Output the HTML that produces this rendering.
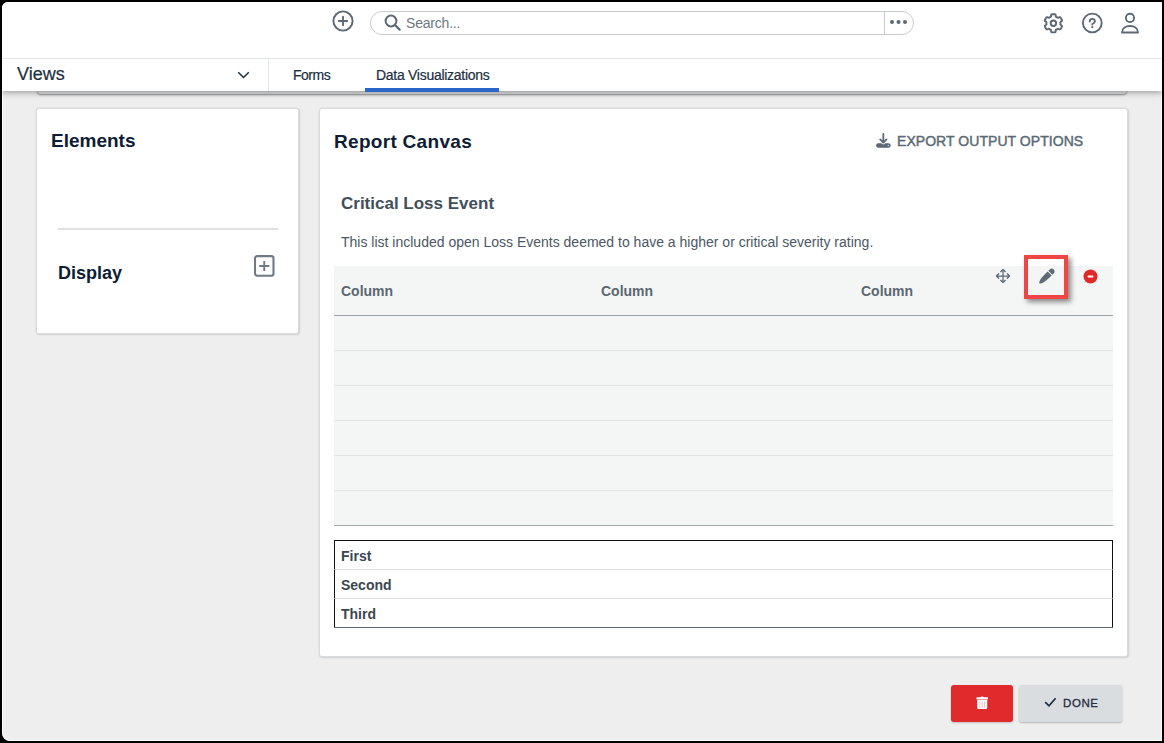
<!DOCTYPE html>
<html><head><meta charset="utf-8">
<style>
*{box-sizing:border-box;margin:0;padding:0}
html,body{width:1164px;height:743px;overflow:hidden;background:#000;font-family:"Liberation Sans",sans-serif}
#win{position:absolute;left:2px;top:2px;width:1160px;height:739px;background:#eeeeee;overflow:hidden;border-radius:6px 0 0 8px}
#win::after{content:"";position:absolute;left:0;top:0;right:0;bottom:0;border-left:1px solid #fff;border-bottom:1px solid #fff;border-right:1px solid #fff;border-radius:6px 0 0 8px;pointer-events:none}
.abs{position:absolute}
/* header */
#hdr{position:absolute;left:0;top:0;width:1160px;height:89px;background:#fff;box-shadow:0 2px 6px rgba(0,0,0,.32);z-index:5}
#hline{position:absolute;left:0;top:56px;width:1160px;height:1px;background:#e3e6e8}
#behind{position:absolute;left:35px;top:60px;width:1090px;height:32px;background:#dfe1e3;border-radius:4px;box-shadow:0 1px 2px rgba(0,0,0,.4);z-index:4}
.navt{position:absolute;font-size:14px;color:#1b2e40;-webkit-text-stroke:.2px #1b2e40}
.card{position:absolute;background:#fff;border:1px solid #d9dcde;border-radius:3px;box-shadow:0 0 2px rgba(0,0,0,.12),1px 1px 2px rgba(0,0,0,.1)}
.ttl{position:absolute;font-weight:bold;color:#0e1d33}
.colh{position:absolute;font-size:14px;font-weight:bold;color:#5b6770}
.rowl{position:absolute;left:0;width:779px;height:1px;background:#e2e5e6}
.lrow{position:absolute;left:0;width:779px;height:29px;border-left:1px solid #111;border-right:1px solid #111}
.lrow span{position:absolute;left:6px;top:8px;font-size:14px;font-weight:bold;color:#3b4650}
</style></head><body>
<div id="win">
  <div id="hdr">
    <!-- plus circle -->
    <svg class="abs" style="left:330px;top:8px" width="22" height="22" viewBox="0 0 22 22"><circle cx="11" cy="11" r="9.6" fill="none" stroke="#5c6873" stroke-width="1.9"/><path d="M11 6.8v8.4M6.8 11h8.4" stroke="#5c6873" stroke-width="1.9" stroke-linecap="round"/></svg>
    <!-- search -->
    <div class="abs" style="left:368px;top:9px;width:544px;height:24px;border:1px solid #c8cbcd;border-radius:12px"></div>
    <div class="abs" style="left:882px;top:10px;width:1px;height:22px;background:#c8cbcd"></div>
    <svg class="abs" style="left:382px;top:12px" width="17" height="17" viewBox="0 0 17 17"><circle cx="7" cy="7" r="5.4" fill="none" stroke="#5c6873" stroke-width="2"/><path d="M11 11l4.6 4.6" stroke="#5c6873" stroke-width="2.2" stroke-linecap="round"/></svg>
    <div class="abs" style="left:404px;top:13px;font-size:14px;letter-spacing:-.2px;color:#6b7780">Search...</div>
    <svg class="abs" style="left:887px;top:16px" width="18" height="8" viewBox="0 0 18 8"><circle cx="3" cy="4" r="2" fill="#5c6873"/><circle cx="9.5" cy="4" r="2" fill="#5c6873"/><circle cx="16" cy="4" r="2" fill="#5c6873"/></svg>
    <!-- gear -->
    <svg class="abs" style="left:1039px;top:9px" width="24" height="24" viewBox="0 0 24 24"><g transform="translate(.4 .3)"><path fill="none" stroke="#5c6873" stroke-width="1.9" stroke-linejoin="round" d="M12.0 2.9L12.4 2.9L12.8 2.9L13.2 3.0L13.6 3.0L14.0 3.1L14.2 3.7L14.3 4.7L14.4 5.4L14.7 5.5L15.0 5.7L15.2 5.8L15.5 5.9L15.8 6.1L16.0 6.3L16.3 6.4L16.5 6.6L17.2 6.3L18.1 5.9L18.7 5.9L19.0 6.2L19.2 6.5L19.5 6.8L19.7 7.1L19.9 7.5L20.1 7.8L20.2 8.2L20.4 8.5L20.6 8.9L20.7 9.3L20.3 9.8L19.5 10.3L19.0 10.8L18.9 11.1L19.0 11.4L19.0 11.7L19.0 12.0L19.0 12.3L19.0 12.6L18.9 12.9L19.0 13.2L19.5 13.7L20.3 14.2L20.7 14.7L20.6 15.1L20.4 15.5L20.2 15.8L20.1 16.2L19.9 16.5L19.7 16.9L19.5 17.2L19.2 17.5L19.0 17.8L18.7 18.1L18.1 18.1L17.2 17.7L16.5 17.4L16.3 17.6L16.0 17.7L15.8 17.9L15.5 18.1L15.2 18.2L15.0 18.3L14.7 18.5L14.4 18.6L14.3 19.3L14.2 20.3L14.0 20.9L13.6 21.0L13.2 21.0L12.8 21.1L12.4 21.1L12.0 21.1L11.6 21.1L11.2 21.1L10.8 21.0L10.4 21.0L10.0 20.9L9.8 20.3L9.7 19.3L9.6 18.6L9.3 18.5L9.0 18.3L8.8 18.2L8.5 18.1L8.2 17.9L8.0 17.7L7.7 17.6L7.5 17.4L6.8 17.7L5.9 18.1L5.3 18.1L5.0 17.8L4.8 17.5L4.5 17.2L4.3 16.9L4.1 16.6L3.9 16.2L3.8 15.8L3.6 15.5L3.4 15.1L3.3 14.7L3.7 14.2L4.5 13.7L5.0 13.2L5.1 12.9L5.0 12.6L5.0 12.3L5.0 12.0L5.0 11.7L5.0 11.4L5.1 11.1L5.0 10.8L4.5 10.3L3.7 9.8L3.3 9.3L3.4 8.9L3.6 8.5L3.8 8.2L3.9 7.8L4.1 7.5L4.3 7.1L4.5 6.8L4.8 6.5L5.0 6.2L5.3 5.9L5.9 5.9L6.8 6.3L7.5 6.6L7.7 6.4L8.0 6.3L8.2 6.1L8.5 5.9L8.8 5.8L9.0 5.7L9.3 5.5L9.6 5.4L9.7 4.7L9.8 3.7L10.0 3.1L10.4 3.0L10.8 3.0L11.2 2.9L11.6 2.9Z"/><circle cx="12" cy="12" r="2.75" fill="none" stroke="#5c6873" stroke-width="1.9"/></g></svg>
    <!-- help -->
    <svg class="abs" style="left:1079px;top:10px" width="23" height="23" viewBox="0 0 23 23"><circle cx="11.3" cy="11" r="9.4" fill="none" stroke="#5c6873" stroke-width="1.9"/><path d="M8.7 9.5A2.6 2.6 0 0 1 13.9 9.5Q13.9 10.9 11.3 12V12.5" fill="none" stroke="#5c6873" stroke-width="1.9" stroke-linecap="round" stroke-linejoin="round"/><circle cx="11.3" cy="15.1" r="1.15" fill="#5c6873"/></svg>
    <!-- user -->
    <svg class="abs" style="left:1118px;top:10px" width="21" height="23" viewBox="0 0 21 23"><circle cx="10" cy="5.9" r="4.1" fill="none" stroke="#5c6873" stroke-width="1.9"/><path d="M2 20.5C2 16.5 5.5 14 10 14S18 16.5 18 20.5Z" fill="none" stroke="#5c6873" stroke-width="1.9" stroke-linejoin="round"/></svg>

    <div id="hline"></div>
    <div class="navt" style="left:15px;top:62px;font-size:18px">Views</div>
    <svg class="abs" style="left:235px;top:69px" width="13" height="8" viewBox="0 0 13 8"><path d="M1.2 1.2l5.3 5.3L11.8 1.2" fill="none" stroke="#1f3344" stroke-width="1.55"/></svg>
    <div class="abs" style="left:266px;top:57px;width:1px;height:32px;background:#e3e6e8"></div>
    <div class="navt" style="left:291px;top:65px;letter-spacing:-0.5px">Forms</div>
    <div class="navt" style="left:374px;top:65px;letter-spacing:-0.28px">Data Visualizations</div>
    <div class="abs" style="left:363px;top:86px;width:134px;height:4px;background:#2a66c9"></div>
  </div>
  <div id="behind"></div>

  <!-- Elements card -->
  <div class="card" style="left:34px;top:106px;width:263px;height:226px">
    <div class="ttl" style="left:14px;top:21px;font-size:19px">Elements</div>
    <div class="abs" style="left:21px;top:119px;width:220px;height:2px;background:#e0e0e0"></div>
    <div class="ttl" style="left:21px;top:154px;font-size:18px">Display</div>
    <svg class="abs" style="left:217px;top:146px" width="22" height="22" viewBox="0 0 22 22"><rect x="1" y="1.1" width="18.5" height="19.6" rx="2.2" fill="none" stroke="#6e7a83" stroke-width="2.1"/><path d="M10.25 6v10M5.2 11h10.1" stroke="#6e7a83" stroke-width="1.9"/></svg>
  </div>

  <!-- Report canvas card -->
  <div class="card" style="left:317px;top:106px;width:809px;height:549px">
    <div class="ttl" style="left:14px;top:22px;font-size:19px;letter-spacing:.3px">Report Canvas</div>
    <svg class="abs" style="left:556px;top:24px" width="16" height="16" viewBox="0 0 16 16"><rect x="0.1" y="10.2" width="14.6" height="4.6" rx="2.3" fill="#5b6a75"/><path d="M4.3 6.4L7.3 9.6L10.3 6.4" fill="none" stroke="#fff" stroke-width="3.4" stroke-linecap="round" stroke-linejoin="round"/><path d="M7.3 1V9.6M4.2 6.4L7.3 9.6L10.4 6.4" fill="none" stroke="#5b6a75" stroke-width="1.8" stroke-linecap="round" stroke-linejoin="round"/><circle cx="12.3" cy="12.5" r=".8" fill="#c9d0d5"/></svg>
    <div class="abs" style="left:577px;top:24px;font-size:14px;color:#5b6a75;-webkit-text-stroke:.45px #5b6a75;letter-spacing:.05px">EXPORT OUTPUT OPTIONS</div>

    <div class="ttl" style="left:21px;top:85px;font-size:17px;color:#414f5b">Critical Loss Event</div>
    <div class="abs" style="left:21px;top:125px;font-size:14px;color:#4b5763">This list included open Loss Events deemed to have a higher or critical severity rating.</div>

    <!-- gray table -->
    <div class="abs" style="left:14px;top:157px;width:779px;height:260px;background:#f4f6f6">
      <div class="colh" style="left:7px;top:17px">Column</div>
      <div class="colh" style="left:267px;top:17px">Column</div>
      <div class="colh" style="left:527px;top:17px">Column</div>
      <div class="abs" style="left:0;top:49px;width:779px;height:1px;background:#9aa1a6"></div>
      <div class="rowl" style="top:84px"></div>
      <div class="rowl" style="top:119px"></div>
      <div class="rowl" style="top:154px"></div>
      <div class="rowl" style="top:189px"></div>
      <div class="rowl" style="top:224px"></div>
      <div class="abs" style="left:0;top:259px;width:779px;height:1px;background:#a3aaaf"></div>
      <!-- icons -->
      <svg class="abs" style="left:661px;top:2px" width="16" height="16" viewBox="0 0 16 16"><path d="M8 1.4V14.6M1.4 8H14.6M5.7 3.7L8 1.4l2.3 2.3M5.7 12.3L8 14.6l2.3-2.3M3.7 5.7L1.4 8l2.3 2.3M12.3 5.7L14.6 8l-2.3 2.3" fill="none" stroke="#5c6873" stroke-width="1.25" stroke-linecap="round" stroke-linejoin="round"/></svg>
      <div class="abs" style="left:690px;top:-11px;width:44px;height:44px;border:4px solid #f04545;box-shadow:3px 3px 5px rgba(0,0,0,.45)"></div>
      <svg class="abs" style="left:702px;top:0px" width="20" height="20" viewBox="0 0 20 20"><g transform="translate(3.3 17.4) rotate(-44)" fill="#5f6b76"><path d="M0 0C1.8 -2.6 6 -2.8 14.4 -2.8L14.4 2.8C6 2.8 1.8 2.4 0 0Z"/><path d="M15.3 -2.8H17.2A2.8 2.8 0 0 1 17.2 2.8H15.3Z"/></g></svg>
      <svg class="abs" style="left:749px;top:3px" width="15" height="15" viewBox="0 0 15 15"><circle cx="7.5" cy="7.5" r="7" fill="#e02a2a"/><rect x="4.6" y="6.5" width="5.8" height="2" rx=".8" fill="#fff"/></svg>
    </div>

    <!-- list -->
    <div class="abs" style="left:14px;top:431px;width:779px;height:88px;border-top:1px solid #111;border-bottom:1px solid #5a6670">
      <div class="lrow" style="top:0;height:28px"><span style="top:7px">First</span></div>
      <div class="lrow" style="top:28px;border-top:1px solid #dcdcdc"><span style="top:7px">Second</span></div>
      <div class="lrow" style="top:57px;border-top:1px solid #dcdcdc"><span style="top:7px">Third</span></div>
    </div>
  </div>

  <!-- buttons -->
  <div class="abs" style="left:949px;top:683px;width:62px;height:37px;background:#e02a2b;border-radius:3px;box-shadow:0 1px 2px rgba(0,0,0,.2)">
    <svg class="abs" style="left:25px;top:11px" width="13" height="15" viewBox="0 0 13 15"><path d="M4.2 1.2Q6.2 -0.2 8.3 1.2V2H4.2Z" fill="#fff"/><rect x="0.4" y="1.2" width="11.6" height="2.2" rx=".6" fill="#fff"/><path d="M1.2 4H11.2V11.7Q11.2 12.9 10 12.9H2.4Q1.2 12.9 1.2 11.7Z" fill="#fff"/><path d="M3.9 5.2V11.6M6.2 5.2V11.6M8.5 5.2V11.6" stroke="#f6b9c4" stroke-width=".9"/></svg>
  </div>
  <div class="abs" style="left:1017px;top:683px;width:103px;height:37px;background:#dadde0;border-radius:3px;box-shadow:0 1px 2px rgba(0,0,0,.25)">
    <svg class="abs" style="left:25px;top:12px" width="13" height="10" viewBox="0 0 13 10"><path d="M1.2 5.2l3.8 3.6L11.6 1.2" fill="none" stroke="#1f2d3d" stroke-width="1.7"/></svg>
    <div class="abs" style="left:44px;top:12px;font-size:11.5px;letter-spacing:.6px;color:#1f2d3d;-webkit-text-stroke:.3px #1f2d3d">DONE</div>
  </div>
</div>
</body></html>
